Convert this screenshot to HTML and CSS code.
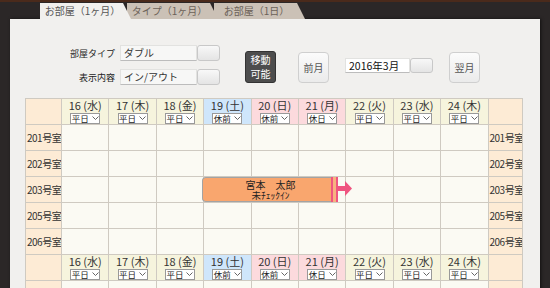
FILE: index.html
```html
<!DOCTYPE html>
<html lang="ja">
<head>
    <meta charset="UTF-8">
    <title>予約カレンダー</title>
    <link rel="stylesheet" href="styles.css">
</head>
<body>
    <div class="page">
        <!-- Tabs -->
        <div class="tabs">
            <div class="tab active">お部屋（1ヶ月）</div>
            <div class="tab">タイプ（1ヶ月）</div>
            <div class="tab">お部屋（1日）</div>
        </div>

        <div class="panel">
            <!-- Toolbar -->
            <div class="toolbar">
                <div class="filters">
                    <div class="filter-row">
                        <label>部屋タイプ</label>
                        <div class="select"><span class="select-text">ダブル</span><span class="select-btn"></span></div>
                    </div>
                    <div class="filter-row">
                        <label>表示内容</label>
                        <div class="select"><span class="select-text">イン/アウト</span><span class="select-btn"></span></div>
                    </div>
                </div>
                <button class="btn-dark">移動<br>可能</button>
                <button class="btn-light">前月</button>
                <div class="select date"><span class="select-text">2016年3月</span><span class="select-btn"></span></div>
                <button class="btn-light">翌月</button>
            </div>

            <!-- Calendar -->
            <div class="calendar">
                <table id="grid">
                    <colgroup id="cols"></colgroup>
                    <tbody id="rows"></tbody>
                </table>
                <div class="booking">
                    <div class="booking-name">宮本　太郎</div>
                    <div class="booking-status">未ﾁｪｯｸｲﾝ</div>
                    <span class="booking-handle"></span>
                    <svg class="booking-arrow" width="15" height="25" viewBox="0 0 15 25">
                        <polygon points="0,9 7,9 7,4 14,11.5 7,19 7,14 0,14" fill="#ef5580"/>
                    </svg>
                </div>
            </div>
        </div>
    </div>

    <script>
        const days = [
            [16, '水', 'wd', '平日'], [17, '木', 'wd', '平日'], [18, '金', 'wd', '平日'],
            [19, '土', 'sat', '休前'], [20, '日', 'hol', '休前'], [21, '月', 'hol', '休日'],
            [22, '火', 'wd', '平日'], [23, '水', 'wd', '平日'], [24, '木', 'wd', '平日']
        ];
        const rooms = ['201号室', '202号室', '203号室', '205号室', '206号室'];
        const chevron = '<svg width="7" height="5" viewBox="0 0 7 5"><polyline points="0.5,0.5 3.5,3.5 6.5,0.5" fill="none" stroke="#555" stroke-width="0.9"/></svg>';

        // column widths
        let cols = '<col style="width:36px">';
        days.forEach(() => cols += '<col style="width:47.4px">');
        cols += '<col>';
        document.getElementById('cols').innerHTML = cols;

        function headerRow() {
            let html = '<tr class="head"><td class="room"></td>';
            days.forEach(d => {
                html += `<td class="day ${d[2]}"><div class="day-label">${d[0]} (${d[1]})</div>` +
                        `<div class="day-select">${d[3]} ${chevron}</div></td>`;
            });
            return html + '<td class="room"></td></tr>';
        }

        function roomRow(name) {
            let html = `<tr class="body"><td class="room">${name}</td>`;
            days.forEach(() => html += '<td class="cell"></td>');
            return html + `<td class="room">${name}</td></tr>`;
        }

        let rows = headerRow();
        rooms.forEach(r => rows += roomRow(r));
        rows += headerRow() + roomRow('207号室');
        document.getElementById('rows').innerHTML = rows;
    </script>
</body>
</html>
```

FILE: styles.css
```css
body {
    margin: 0;
    background-color: #2b2727;
    font-family: "Noto Sans CJK JP", sans-serif;
    color: #333;
}
.page {
    height: 286px;
    border-top: 2px solid #4a2a1b;
    overflow: hidden;
}
.tabs {
    display: flex;
    height: 16px;
    margin-top: 1px;
    padding-left: 40px;
}
.tab {
    width: 91px;
    height: 16px;
    padding-right: 6px;
    box-sizing: border-box;
    background-color: #cbc1b6;
    color: #6b6158;
    font-size: 10px;
    line-height: 16px;
    text-align: center;
    clip-path: polygon(0 0, calc(100% - 8px) 0, 100% 100%, 0 100%);
}
.tab + .tab {
    margin-left: -4px;
}
.tab.active {
    position: relative;
    z-index: 2;
    background-color: #f1f0ee;
    color: #555;
}
.panel {
    width: 530px;
    height: 300px;
    margin-left: 10px;
    background-color: #f1f0ee;
    box-shadow: 1px 0 3px rgba(0, 0, 0, 0.6);
}
.toolbar {
    display: flex;
    align-items: center;
    padding: 26px 0 0 60px;
}
.filters {
    display: flex;
    flex-direction: column;
    gap: 8px;
}
.filter-row {
    display: flex;
    align-items: center;
}
.filter-row label {
    width: 45px;
    margin-right: 5px;
    font-size: 9px;
    color: #222;
    text-align: right;
    white-space: nowrap;
}
.select {
    display: flex;
    width: 100px;
    height: 16px;
}
.select-text {
    flex: 1;
    padding-left: 3px;
    background-color: #f7f7f6;
    border: 1px solid #e2e2e0;
    border-bottom-color: #bcbcbc;
    font-size: 10px;
    line-height: 14px;
    color: #333;
}
.select-btn {
    width: 21px;
    border: 1px solid #c8c8c8;
    border-radius: 3px;
    background: linear-gradient(#f8f8f8, #e4e4e4);
}
.select.date {
    width: 88px;
    height: 15px;
    margin-left: 16px;
}
.select.date .select-text {
    background-color: #fff;
    font-size: 10.5px;
    line-height: 13px;
    color: #111;
}
button {
    font-family: inherit;
    padding: 0;
    cursor: pointer;
}
.btn-dark {
    width: 31px;
    height: 32px;
    margin: 4px 0 0 25px;
    background-color: #4d4d4d;
    border: 1px solid #333;
    border-radius: 3px;
    color: #fff;
    font-size: 10px;
    line-height: 14px;
}
.btn-light {
    width: 31px;
    height: 31px;
    margin: 4px 0 0 22px;
    background: linear-gradient(#fbfbfb, #ebebeb);
    border: 1px solid #cfcfcf;
    border-radius: 4px;
    color: #555;
    font-size: 10px;
}
.btn-light + .select + .btn-light {
    margin-left: 16px;
}
.calendar {
    position: relative;
    width: 498px;
    margin: 13px 0 0 15px;
}
.calendar table {
    width: 498px;
    table-layout: fixed;
    border-collapse: collapse;
}
.calendar td {
    height: 25px;
    padding: 0;
    border: 1px solid #cfcac1;
    overflow: hidden;
    white-space: nowrap;
    font-size: 10px;
    line-height: 12px;
}
.calendar td.room {
    background-color: #fdebd5;
    padding-left: 1px;
    letter-spacing: -0.5px;
    color: #333;
}
.calendar td.cell {
    background-color: #fbfaf3;
}
.calendar td.day {
    vertical-align: top;
    background-color: #f6f4dd;
}
.calendar td.sat {
    background-color: #cfe6fb;
}
.calendar td.hol {
    background-color: #fcdadd;
}
.day-label {
    font-size: 11px;
    line-height: 13px;
    text-align: center;
    color: #333;
}
.day-select {
    display: flex;
    align-items: center;
    justify-content: center;
    gap: 3px;
    width: 30px;
    height: 11px;
    margin: 1px auto 0;
    box-sizing: border-box;
    background-color: #fff;
    border: 1px solid #999;
    font-size: 8.5px;
    line-height: 9px;
    color: #222;
}
.booking {
    position: absolute;
    left: 177px;
    top: 79px;
    width: 136px;
    height: 25px;
    box-sizing: border-box;
    background-color: #f9a66e;
    border: 1px solid #a3a3a3;
    border-right: none;
    border-radius: 4px 0 0 4px;
    text-align: center;
    color: #222;
}
.booking-name {
    margin-top: 1px;
    font-size: 10px;
    line-height: 11px;
}
.booking-status {
    font-size: 9.5px;
    line-height: 11px;
}
.booking-handle {
    position: absolute;
    top: -1px;
    right: 0;
    width: 3px;
    height: 25px;
    border-left: 2px solid #ef5580;
    border-right: 2px solid #ef5580;
    background-color: #f7b37e;
}
.booking-arrow {
    position: absolute;
    top: -1px;
    left: 100%;
}
```
